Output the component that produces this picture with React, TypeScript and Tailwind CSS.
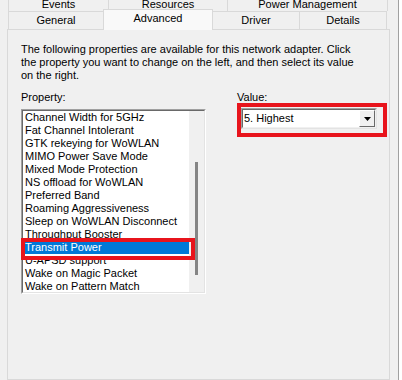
import React from 'react';

const properties = [
  'Channel Width for 5GHz',
  'Fat Channel Intolerant',
  'GTK rekeying for WoWLAN',
  'MIMO Power Save Mode',
  'Mixed Mode Protection',
  'NS offload for WoWLAN',
  'Preferred Band',
  'Roaming Aggressiveness',
  'Sleep on WoWLAN Disconnect',
  'Throughput Booster',
  'Transmit Power',
  'U-APSD support',
  'Wake on Magic Packet',
  'Wake on Pattern Match',
];

const selected = 'Transmit Power';

const App: React.FC = () => {
  return (
    <div className="w-[402px] h-[380px] bg-[#f0f0f0] overflow-hidden flex font-['Liberation_Sans',Arial,sans-serif] text-[11px] leading-[13px] text-black">
      <div className="w-[398px] flex flex-col">
        {/* back row of tabs, clipped at the top */}
        <div className="h-[11px] flex items-end overflow-hidden pl-[8px]">
          <div className="w-[100px] h-[14px] flex items-center justify-center border-l border-[#d9d9d9]">Events</div>
          <div className="w-[119px] h-[14px] flex items-center justify-center border-l border-[#d9d9d9]">Resources</div>
          <div className="w-[161px] h-[14px] flex items-center justify-center border-x border-[#d9d9d9]">Power Management</div>
        </div>

        {/* front row of tabs */}
        <div className="h-[18px] flex items-end pl-[8px]">
          <div className="w-[95px] h-[18px] flex items-center justify-center border-l border-t border-[#d9d9d9]">General</div>
          <div className="relative top-[1px] z-10 w-[110px] h-[21px] flex items-center justify-center pb-[3px] bg-[#f9f9f9] border-x border-t border-[#d9d9d9]">
            Advanced
          </div>
          <div className="w-[86px] h-[18px] flex items-center justify-center border-t border-[#d9d9d9]">Driver</div>
          <div className="w-[88px] h-[18px] flex items-center justify-center border-l border-r border-t border-[#d9d9d9]">Details</div>
        </div>

        {/* tab page */}
        <div className="ml-[7px] w-[383px] flex-1 border border-[#d9d9d9] bg-[#f0f0f0] pl-[13px] pt-[13px]">
          <p className="whitespace-nowrap">
            The following properties are available for this network adapter. Click
            <br />
            the property you want to change on the left, and then select its value
            <br />
            on the right.
          </p>

          <div className="flex mt-[9px]">
            <div className="w-[185px] flex flex-col">
              <span>Property:</span>
              <div className="relative mt-[5px] w-[185px] h-[185px] border border-t-[#a0a0a0] border-l-[#a0a0a0] border-r-white border-b-white">
                <div className="h-full flex border border-t-[#696969] border-l-[#696969] border-r-[#e3e3e3] border-b-[#e3e3e3] bg-white overflow-hidden">
                  <div className="flex-1 flex flex-col">
                    {properties.map((p) => (
                      <div
                        key={p}
                        className={`h-[13px] shrink-0 pl-[2px] whitespace-nowrap ${
                          p === selected ? 'bg-[#0078d7] text-white' : ''
                        }`}
                      >
                        {p}
                      </div>
                    ))}
                  </div>
                  <div className="w-[15px] bg-[#f0f0f0]">
                    <div className="ml-[6px] mt-[51px] w-[3px] h-[113px] bg-[#858585]" />
                  </div>
                </div>
                <div className="absolute left-[-1px] top-[128px] w-[174px] h-[22px] border-4 border-[#e8141c]" />
              </div>
            </div>

            <div className="relative ml-[31px] flex flex-col">
              <span>Value:</span>
              <div className="mt-[4px] ml-[4px] w-[136px] h-[21px] border border-t-[#a0a0a0] border-l-[#a0a0a0] border-r-[#e3e3e3] border-b-[#e3e3e3]">
                <div className="h-full flex items-center border border-t-[#696969] border-l-[#696969] border-r-[#f0f0f0] border-b-[#f0f0f0] bg-white">
                  <span className="flex-1 pl-[1px]">5. Highest</span>
                  <div className="w-[16px] h-full flex items-center justify-center bg-[#f0f0f0] border border-t-white border-l-white border-r-[#696969] border-b-[#696969]">
                    <svg width="7" height="4" viewBox="0 0 7 4">
                      <path d="M0 0h7L3.5 4z" fill="#000" />
                    </svg>
                  </div>
                </div>
              </div>
              <div className="absolute left-0 top-[12px] w-[150px] h-[34px] border-4 border-[#e8141c]" />
            </div>
          </div>
        </div>
      </div>
      <div className="w-px bg-[#a0a0a0]" />
      <div className="flex-1 bg-white" />
    </div>
  );
};

export default App;
